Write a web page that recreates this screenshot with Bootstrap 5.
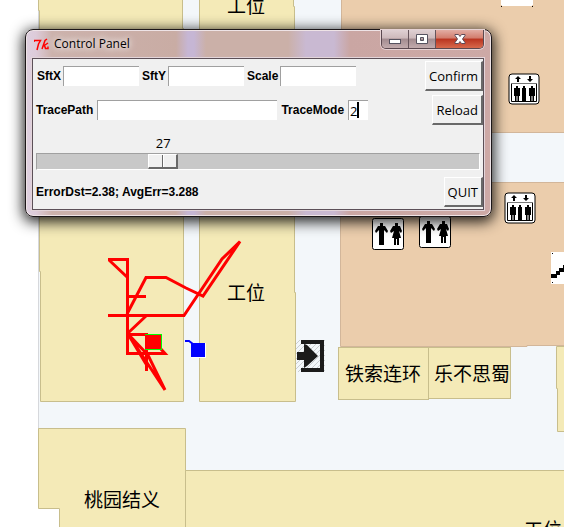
<!DOCTYPE html>
<html lang="zh-CN">
<head>
<meta charset="utf-8">
<meta name="viewport" content="width=device-width, initial-scale=1">
<title>Control Panel</title>
<link rel="stylesheet" href="https://cdn.jsdelivr.net/npm/bootstrap@5.3.0/dist/css/bootstrap.min.css">
<style>
body { font-family: "Open Sans", "Noto Sans", sans-serif; font-size: 13px; line-height: 18px; color: #000; background: #fff; }
.room { fill: #f4eab7; stroke: #c8be8c; }
.hall { fill: #ebcdac; stroke: #d2b69a; }
.place { font-family: "Noto Sans CJK SC", sans-serif; font-size: 19px; text-anchor: middle; fill: #000; }
.trace { fill: none; stroke: #f00; stroke-width: 3; }
.tk-window { left: 25px; top: 29px; width: 467px; padding: 0 7px 6px 6px; border: 1px solid #1c1719; border-radius: 8px;
  background: linear-gradient(90deg, #ded0e0 0, #ddcbd9 10px, #ccb2ac 26px, #c9aca4 150px, #c6b6d4 162px, #c6b6d4 168px, #cbb0a8 180px, #cbb0a8 262px, #c9b9d2 280px, #c9b9d2 308px, #caa6a3 324px, #cda9a6 100%);
  box-shadow: inset 0 0 0 1px #eee3e6, 0 3px 14px 2px rgba(0, 0, 0, .85); }
.title-bar { height: 28px; font-size: 12px; padding-left: 2px; }
.title-text { text-shadow: 0 0 6px #fff, 0 0 10px #fff; }
.caption-buttons { height: 19px; border: 1px solid #5b4950; border-top: 0; border-radius: 0 0 5px 5px; overflow: hidden; box-shadow: 0 0 0 1px #e6d2d3; }
.cap { width: 27px; padding: 0; border: 0; border-right: 1px solid #66545b; background: linear-gradient(#dfd0d3 0, #cdb9bb 45%, #a28b8f 50%, #c2abad 100%); }
.cap-close { width: 47px; border-right: 0; background: linear-gradient(#e2ada3 0, #d27c6c 45%, #b93420 50%, #d7694c 100%); }
.client { background: #f0f0f0; border: 1px solid #5c5058; box-shadow: 0 0 0 1px #e3d5da; padding: 2px 0; }
.tk-label { font: bold 12px/16px "Liberation Sans", Arial, sans-serif; }
.tk-entry { width: 76px; height: 20px; padding: 0 2px; border: 0; border-left: 1px solid #a0a0a0; border-top: 1px solid #a0a0a0; border-radius: 0; background: #fff; font-size: 13px; outline: 0; }
.entry-path { width: 180px; }
.entry-mode { width: 20px; padding: 0 1px; background: linear-gradient(#000, #000) 8px 1px / 2px 16px no-repeat #fff; }
.tk-button { height: 30px; padding: 0 3px; border: 1px solid #fff; border-right: 2px solid #696969; border-bottom: 2px solid #696969; background: #f0f0f0; }
.gap-label { gap: 2px; }
.gap-fields { gap: 3px; }
.inset-label { padding-left: 3px; }
.scale-block { padding: 8px 3px 7px; }
.scale-value { width: 30px; margin-left: calc((100% - 32px) * var(--pos) + 1px); line-height: 20px; }
.tk-scale { appearance: none; height: 17px; border: 1px solid #a0a0a0; border-right-color: #fff; border-bottom-color: #fff; background: #c8c8c8; }
.tk-scale::-webkit-slider-thumb { appearance: none; width: 30px; height: 15px; border: 1px solid #fff; border-right: 2px solid #696969; border-bottom: 2px solid #696969; background: linear-gradient(90deg, #f0f0f0 13px, #696969 13px 14px, #fff 14px 15px, #f0f0f0 15px); }
</style>
<script src="https://cdn.jsdelivr.net/npm/bootstrap@5.3.0/dist/js/bootstrap.bundle.min.js"></script>
</head>
<body>
<main class="position-relative overflow-hidden vh-100">
  <svg class="d-block w-100 h-100" role="img" aria-label="Floor map">
    <defs>
      <g id="lift">
        <rect x="1" y="1" width="30" height="30" rx="3" fill="#fff" stroke="#000"/>
        <path d="M10 3l3 3h-2v3H9V6H7zM22 9l3-3h-2V3h-2v3h-2z"/>
        <path d="M3.500 10v18.500h25V10" fill="none" stroke="#000"/><path d="M3 10.500h26" stroke="#777" stroke-width="1"/>
        <path d="M8 13h2v2h2v8h-1v5H9.500v-5h-1v5H7v-5H6v-8h2zM15 13h2v2h1v13h-4V15h1zM23 13h2v2h2v8h-1v5h-1.500v-5h-1v5H22v-5h-1v-8h2z"/>
      </g>
      <g id="restroom">
        <rect x=".5" y=".5" width="31" height="31" rx="2" fill="#fff" stroke="#000"/>
        <path d="M8 5h3v3H8zM23 5h3v3h-3z"/>
        <path d="M6 8h7l3 5-1 2-3-3v15H7V12l-3 3-1-2zM21 8h7l2 5-1 2-2-2 2 7h-2v7h-2v-6h-1v6h-2v-7h-2l2-7-3 2-1-2z"/>
      </g>
      <pattern id="hatch" width="5" height="5" patternUnits="userSpaceOnUse"><path d="M0 5L5 0" stroke="#c9cdd0"/></pattern>
    </defs>
    <rect x="38" y="0" width="100%" height="100%" fill="#f3f7fa"/>
    <path d="M38.500 0v430" stroke="#d6d8dc"/>
    <path class="room" d="M38.500-2V10.500h1V271.500h1V401.500H183.500V28.500h-1V-2z"/>
    <path class="room" d="M199.500-2V401.500H295.500V292.500h-1V6.500h-1V-2z"/>
    <path class="hall" d="M341.500-2V132.500H3000V-2zM340.500 182.500V346.500H527V345.500H3000V182.500z"/>
    <rect class="room" x="338.500" y="347.500" width="90" height="52"/>
    <rect class="room" x="428.500" y="347.500" width="82" height="51"/>
    <path class="room" d="M3000 346.500H556.500V388.500h1V431.500H3000z"/>
    <path d="M38 508h22v3000H38z" fill="#fff"/>
    <path class="room" d="M38.500 428.500H185.500V3000H59.500V508.500h-21z"/>
    <path class="room" d="M185.500 470.500H3000V3000H185.500z"/>

    <text class="place" x="246" y="13">工位</text>
    <text class="place" x="246" y="300">工位</text>
    <text class="place" x="383" y="381">铁索连环</text>
    <text class="place" x="472" y="381">乐不思蜀</text>
    <text class="place" x="122" y="507">桃园结义</text>
    <text class="place" x="543" y="537">工位</text>

    <use href="#lift" x="508" y="73"/>
    <use href="#lift" x="504" y="192"/>
    <use href="#restroom" x="372" y="218"/>
    <use href="#restroom" x="419" y="216"/>
    <path d="M502 0h30v6h-30zM501 0h32v5h-32zM551 252h32v32h-32z" fill="#fff"/>
    <path d="M501 6h1v1h-1zM532 6h1v1h-1zM552 253h1v1h-1zM552 282h1v1h-1zM551 274h5v-3h3v-3h4v-3h4v4h-3v3h-4v3h-3v3h-6z"/>
    <rect x="296" y="340" width="29" height="32" fill="url(#hatch)"/>
    <path d="M301 340h23v32h-23v-4h19v-24h-19zM297 352h7v-8l3 1 11 11-11 10-3 2v-8h-7z" fill="#1b1b1b"/>

    <path class="trace" d="M108 259.500H127.500V353.500H165L160 348M109 260L127 277M127 296.500h19M108 315.500h76L222 259L240 241.500L203 296L186 288L166 277.500H146L127 314M146 316L128 333M127 334.500H146.500V371M128 334L165 390L148 355L128 334L146 364"/>
    <path d="M145 334h17v16h-17z" fill="#0f0"/><path d="M145 335h16v14h-16z" fill="#f00"/>
    <path d="M185 341h4l4 3" fill="none" stroke="#00f" stroke-width="2"/>
    <path d="M191 343h15v15h-15z" fill="#fff"/><path d="M191 343h14v14h-14z" fill="#00f"/>
  </svg>

  <section class="tk-window position-absolute" aria-label="Control Panel">
    <header class="title-bar d-flex align-items-start justify-content-between">
      <div class="d-flex align-items-center gap-1 h-100">
        <svg width="16" height="16" fill="none" stroke="#f00" stroke-width="1.500" aria-hidden="true"><path d="M0 6V4.500h6.500L4.500 8 3 14M13 3l-2 1.500L8 13M9.500 10L14 7M10.500 9.500l1 3H14v-2"/></svg>
        <span class="title-text">Control Panel</span>
      </div>
      <div class="caption-buttons d-flex">
        <button class="cap" type="button" aria-label="Minimize"><svg class="d-block mx-auto" width="14" height="16"><rect x="1.500" y="8.500" width="11" height="4" fill="#fff" stroke="#55525f"/></svg></button>
        <button class="cap" type="button" aria-label="Maximize"><svg class="d-block mx-auto" width="14" height="16"><path d="M1.500 3.500h11v9h-11zM5.500 6.500v3h3v-3z" fill="#fff" fill-rule="evenodd" stroke="#55525f"/></svg></button>
        <button class="cap cap-close" type="button" aria-label="Close"><svg class="d-block mx-auto" width="14" height="16"><path d="M2 3.500h3.500L7 5.500l1.500-2H12v1L9.500 8l2.500 3.500v1H8.500L7 10.500l-1.500 2H2v-1L4.500 8 2 4.500z" fill="#fff" stroke="#5d4b58"/></svg></button>
      </div>
    </header>
    <form class="client" onsubmit="return false">
      <div class="d-flex align-items-center gap-fields">
        <div class="d-flex align-items-center gap-label ps-1"><label class="tk-label" for="sftx">SftX</label><input class="tk-entry" id="sftx" type="text"></div>
        <div class="d-flex align-items-center gap-label"><label class="tk-label" for="sfty">SftY</label><input class="tk-entry" id="sfty" type="text"></div>
        <div class="d-flex align-items-center gap-label"><label class="tk-label" for="scale">Scale</label><input class="tk-entry" id="scale" type="text"></div>
        <button class="tk-button ms-auto" type="button">Confirm</button>
      </div>
      <div class="d-flex align-items-center gap-1 pt-1">
        <label class="tk-label inset-label" for="path">TracePath</label><input class="tk-entry entry-path" id="path" type="text">
        <label class="tk-label" for="mode">TraceMode</label><input class="tk-entry entry-mode" id="mode" type="text" value="2">
        <button class="tk-button ms-auto" type="button">Reload</button>
      </div>
      <div class="scale-block">
        <output class="scale-value d-block text-center" for="step" style="--pos: .27">27</output>
        <input class="tk-scale d-block w-100" id="step" type="range" min="0" max="100" value="27" aria-label="Step">
      </div>
      <div class="d-flex align-items-center justify-content-between">
        <span class="tk-label inset-label">ErrorDst=2.38; AvgErr=3.288</span>
        <button class="tk-button" type="button">QUIT</button>
      </div>
    </form>
  </section>
</main>
</body>
</html>
